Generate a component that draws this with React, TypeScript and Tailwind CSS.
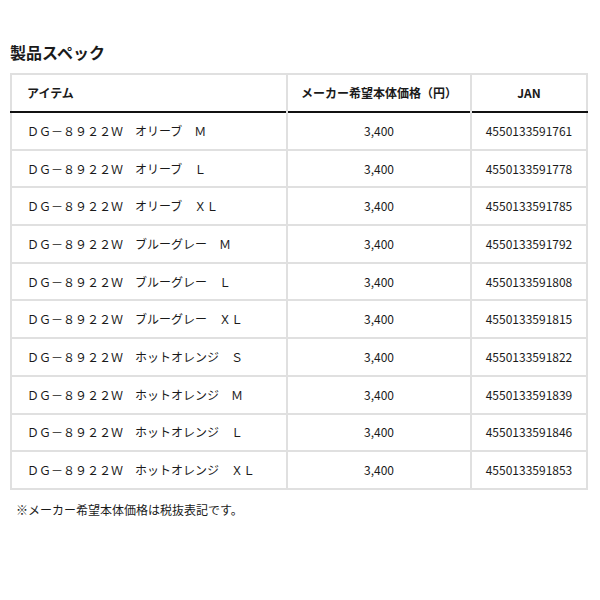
import React from "react";

const rows = [
  ["ＤＧ－８９２２Ｗ　オリーブ　Ｍ", "4550133591761"],
  ["ＤＧ－８９２２Ｗ　オリーブ　Ｌ", "4550133591778"],
  ["ＤＧ－８９２２Ｗ　オリーブ　ＸＬ", "4550133591785"],
  ["ＤＧ－８９２２Ｗ　ブルーグレー　Ｍ", "4550133591792"],
  ["ＤＧ－８９２２Ｗ　ブルーグレー　Ｌ", "4550133591808"],
  ["ＤＧ－８９２２Ｗ　ブルーグレー　ＸＬ", "4550133591815"],
  ["ＤＧ－８９２２Ｗ　ホットオレンジ　Ｓ", "4550133591822"],
  ["ＤＧ－８９２２Ｗ　ホットオレンジ　Ｍ", "4550133591839"],
  ["ＤＧ－８９２２Ｗ　ホットオレンジ　Ｌ", "4550133591846"],
  ["ＤＧ－８９２２Ｗ　ホットオレンジ　ＸＬ", "4550133591853"],
];

export default function App() {
  return (
    <div
      className="h-[600px] w-[600px] bg-white text-[#1a1a1a]"
      style={{ fontFamily: '"Noto Sans CJK JP", "Noto Sans", sans-serif' }}
    >
      <div className="px-[10px] pt-[40px]">
        <h2 className="text-[16px] font-bold leading-[24px]">製品スペック</h2>

        <table className="mt-[9px] w-[578px] table-fixed border-collapse border-2 border-[#e0e0e0] text-[12px]">
          <thead>
            <tr className="h-[38px] border-b-2 border-b-[#111]">
              <th className="w-[276px] border-r-2 border-[#e0e0e0] pl-[15px] text-left font-bold">
                アイテム
              </th>
              <th className="w-[184px] border-r-2 border-[#e0e0e0] text-center font-bold">
                メーカー希望本体価格（円）
              </th>
              <th className="text-center font-bold">JAN</th>
            </tr>
          </thead>
          <tbody>
            {rows.map(([name, jan]) => (
              <tr key={jan} className="h-[37.7px] border-b-2 border-[#e0e0e0]">
                <td className="border-r-2 border-[#e0e0e0] pl-[15px]">{name}</td>
                <td className="border-r-2 border-[#e0e0e0] text-center">3,400</td>
                <td className="text-center">{jan}</td>
              </tr>
            ))}
          </tbody>
        </table>

        <p className="mt-[11px] pl-[6px] text-[12px]">※メーカー希望本体価格は税抜表記です。</p>
      </div>
    </div>
  );
}
